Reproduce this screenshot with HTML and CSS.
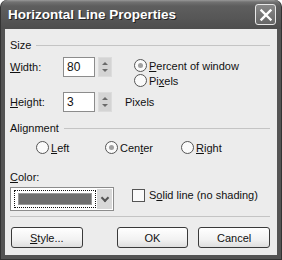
FILE: index.html
```html
<!DOCTYPE html>
<html lang="en">
<head>
    <meta charset="UTF-8">
    <title>Horizontal Line Properties</title>
    <link rel="stylesheet" href="styles.css">
</head>
<body>

    <div class="window">
        <!-- Barra de titulo -->
        <div class="titlebar">
            <span class="title">Horizontal Line Properties</span>
            <span class="close">
                <svg width="14" height="14" viewBox="0 0 14 14">
                    <path d="M2.5 2.5 L11.5 11.5 M11.5 2.5 L2.5 11.5" stroke="#fff" stroke-width="2.4" stroke-linecap="square"/>
                </svg>
            </span>
        </div>

        <div class="client">
            <!-- Grupo Size -->
            <div class="group-head"><span>Size</span><span class="rule"></span></div>

            <div class="size-row first">
                <span class="lbl"><u>W</u>idth:</span>
                <span class="field">80</span>
                <span class="spin"><span class="arrow up"></span><span class="arrow down"></span></span>
                <div class="radio-stack">
                    <div class="opt"><span class="radio on"></span><span><u>P</u>ercent of window</span></div>
                    <div class="opt"><span class="radio"></span><span>Pi<u>x</u>els</span></div>
                </div>
            </div>

            <div class="size-row">
                <span class="lbl"><u>H</u>eight:</span>
                <span class="field">3</span>
                <span class="spin"><span class="arrow up"></span><span class="arrow down"></span></span>
                <span class="unit">Pixels</span>
            </div>

            <!-- Grupo Alignment -->
            <div class="group-head align-head"><span>Alignment</span><span class="rule"></span></div>

            <div class="align-row">
                <div class="opt left"><span class="radio"></span><span><u>L</u>eft</span></div>
                <div class="opt center"><span class="radio on"></span><span>Cen<u>t</u>er</span></div>
                <div class="opt"><span class="radio"></span><span><u>R</u>ight</span></div>
            </div>

            <div class="color-label"><u>C</u>olor:</div>

            <div class="color-row">
                <div class="combo">
                    <div class="focus"><div class="swatch"></div></div>
                    <span class="drop"><span class="chev"></span></span>
                </div>
                <div class="opt check-opt"><span class="check"></span><span>S<u>o</u>lid line (no shading)</span></div>
            </div>

            <div class="separator"></div>

            <div class="buttons">
                <button class="btn style"><u>S</u>tyle...</button>
                <button class="btn ok">OK</button>
                <button class="btn">Cancel</button>
            </div>
        </div>
    </div>

</body>
</html>
```

FILE: styles.css
```css
/* Pagina */
body {
    margin: 0;
    font-family: "Liberation Sans", Arial, sans-serif;
    font-size: 11px;
    color: #111;
}

/* Janela estilo XP em tons de cinza */
.window {
    width: 282px;
    height: 260px;
    box-sizing: border-box;
    background: #545454;
    border-radius: 7px 7px 0 0;
    padding: 0 4px 4px 4px;
    border: 1px solid #333;
    border-top: none;
    overflow: hidden;
    display: flex;
    flex-direction: column;
}

.titlebar {
    height: 29px;
    margin: 0 -4px;
    padding: 0 5px 0 7px;
    display: flex;
    align-items: center;
    justify-content: space-between;
    background: linear-gradient(#999 0, #727272 2px, #5e5e5e 6px, #575757 60%, #4e4e4e 100%);
    border-radius: 7px 7px 0 0;
}

.title {
    color: #fff;
    font-family: "Liberation Sans", Arial, sans-serif;
    font-weight: bold;
    font-size: 13.5px;
    text-shadow: 1px 1px 0 #222;
}

.close {
    width: 19px;
    height: 19px;
    border: 1px solid #e8e8e8;
    border-radius: 3px;
    background: linear-gradient(#888, #666);
    display: flex;
    align-items: center;
    justify-content: center;
}

.client {
    flex: 1;
    background: #ececec;
    padding: 8px 7px 0 5px;
}

/* Cabecalho de grupo com linha */
.group-head {
    display: flex;
    align-items: center;
    height: 16px;
}

.rule {
    flex: 1;
    height: 0;
    border-top: 1px solid #c4c4c4;
    margin-left: 5px;
}

/* Linhas de tamanho */
.size-row {
    display: flex;
    align-items: flex-start;
    height: 20px;
}

.size-row.first {
    margin-top: 4px;
    height: 35px;
}

.lbl {
    width: 53px;
    line-height: 20px;
}

.field {
    width: 27px;
    height: 18px;
    border: 1px solid #8c8c8c;
    background: #fff;
    line-height: 18px;
    padding-left: 3px;
    font-size: 12px;
}

.spin {
    width: 14px;
    height: 20px;
    margin-left: 3px;
    background: #d4d4d4;
    border: 1px solid #dcdcdc;
    box-sizing: border-box;
    display: flex;
    flex-direction: column;
    align-items: center;
    justify-content: center;
    gap: 4px;
}

.arrow {
    width: 0;
    height: 0;
    border-left: 3px solid transparent;
    border-right: 3px solid transparent;
}

.arrow.up {
    border-bottom: 3px solid #6a6a6a;
}

.arrow.down {
    border-top: 3px solid #6a6a6a;
}

.radio-stack {
    margin-left: 22px;
    margin-top: 1px;
}

.opt {
    display: flex;
    align-items: center;
    height: 15px;
    gap: 2px;
}

.radio {
    width: 11px;
    height: 11px;
    border: 1px solid #555;
    border-radius: 50%;
    background: #fafafa;
    display: flex;
    align-items: center;
    justify-content: center;
}

.radio.on::after {
    content: "";
    width: 5px;
    height: 5px;
    border-radius: 50%;
    background: #a0a0a0;
}

.unit {
    margin-left: 13px;
    line-height: 20px;
}

/* Alinhamento */
.align-head {
    margin-top: 8px;
}

.align-row {
    display: flex;
    margin-top: 4px;
    padding-left: 26px;
}

.align-row .left {
    width: 69px;
}

.align-row .center {
    width: 76px;
}

/* Cor */
.color-label {
    margin-top: 14px;
    line-height: 16px;
}

.color-row {
    display: flex;
    align-items: flex-start;
    margin-top: 2px;
}

.combo {
    width: 104px;
    height: 24px;
    box-sizing: border-box;
    border: 1px solid #8c8c8c;
    background: #fff;
    display: flex;
    align-items: center;
    padding: 0 1px 0 3px;
}

.focus {
    width: 80px;
    height: 16px;
    border: 1px dotted #111;
    display: flex;
    align-items: center;
    justify-content: center;
}

.swatch {
    width: 74px;
    height: 12px;
    background: #6e6e6e;
    border: 1px solid #9a9a9a;
    box-sizing: border-box;
}

.drop {
    margin-left: auto;
    width: 15px;
    height: 20px;
    background: #d8d8d8;
    display: flex;
    align-items: center;
    justify-content: center;
}

.chev {
    width: 4px;
    height: 4px;
    border-right: 2px solid #555;
    border-bottom: 2px solid #555;
    transform: rotate(45deg);
    margin-top: -3px;
}

.check-opt {
    margin-left: 18px;
    margin-top: 1px;
    height: 14px;
    gap: 4px;
}

.check {
    width: 11px;
    height: 11px;
    border: 1px solid #555;
    background: #fafafa;
}

/* Separador e botoes */
.separator {
    margin-top: 5px;
    border-top: 1px solid #c4c4c4;
}

.buttons {
    display: flex;
    margin-top: 10px;
    padding-left: 1px;
}

.btn {
    width: 73px;
    height: 21px;
    padding: 0;
    font-family: "Liberation Sans", Arial, sans-serif;
    font-size: 11px;
    color: #111;
    border: 1px solid #3a3a3a;
    border-radius: 3px;
    background: linear-gradient(#ffffff, #f2f2f2 60%, #dedede);
}

.btn.ok {
    margin-left: 34px;
    margin-right: 10px;
}
```
